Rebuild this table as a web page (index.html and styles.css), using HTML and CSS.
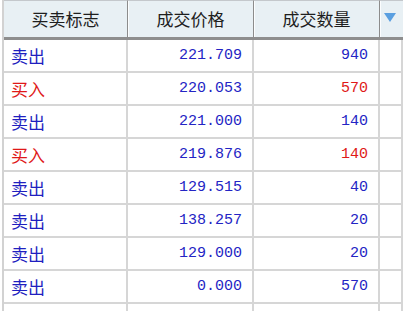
FILE: index.html
```html
<!DOCTYPE html>
<html lang="zh">
<head>
<meta charset="utf-8">
<link rel="stylesheet" href="styles.css">
</head>
<body>
<div class="grid">
  <div class="hd">买卖标志</div>
  <div class="hd">成交价格</div>
  <div class="hd">成交数量</div>
  <div class="hd hd-sort"><svg class="arrow" width="12" height="9" viewBox="0 0 12 9"><polygon points="0,0 12,0 6,9" fill="#5a9fe0"/></svg></div>

  <div class="c name sell">卖出</div><div class="c num">221.709</div><div class="c num">940</div><div class="c"></div>
  <div class="c name buy">买入</div><div class="c num">220.053</div><div class="c num red">570</div><div class="c"></div>
  <div class="c name sell">卖出</div><div class="c num">221.000</div><div class="c num">140</div><div class="c"></div>
  <div class="c name buy">买入</div><div class="c num">219.876</div><div class="c num red">140</div><div class="c"></div>
  <div class="c name sell">卖出</div><div class="c num">129.515</div><div class="c num">40</div><div class="c"></div>
  <div class="c name sell">卖出</div><div class="c num">138.257</div><div class="c num">20</div><div class="c"></div>
  <div class="c name sell">卖出</div><div class="c num">129.000</div><div class="c num">20</div><div class="c"></div>
  <div class="c name sell">卖出</div><div class="c num">0.000</div><div class="c num">570</div><div class="c"></div>
  <div class="c last"></div><div class="c last"></div><div class="c last"></div><div class="c last"></div>
</div>
</body>
</html>
```
FILE: styles.css
```css
html, body {
  margin: 0;
  padding: 0;
  background: #ffffff;
  overflow: hidden;
}
body {
  width: 403px;
  height: 311px;
}
.grid {
  display: grid;
  grid-template-columns: 124px 126px 126px 1fr;
  grid-template-rows: 40px repeat(8, 33px) 7px;
  margin-left: 2px;
  border-left: 2px solid #d2d2d2;
  font-family: "Noto Sans CJK SC", "Noto Sans", sans-serif;
}
.hd {
  background: #e8f0f4;
  border-top: 1px solid #c4c8cc;
  border-bottom: 3px solid #8e8e8e;
  border-right: 1px solid #8c8c8c;
  box-shadow: inset 1px 0 #fbfdfe;
  display: flex;
  align-items: center;
  justify-content: center;
  font-size: 17px;
  color: #1e1e1e;
  padding-bottom: 1px;
}
.hd:first-child {
  box-shadow: none;
}
.hd-sort {
  justify-content: flex-start;
  padding-left: 4px;
  border-right: none;
}
.arrow {
  display: block;
  margin-top: -3px;
}
.c {
  border-right: 2px solid #d6d6d6;
  border-bottom: 2px solid #d6d6d6;
  display: flex;
  align-items: center;
}
.c.last {
  border-bottom: none;
}
.name {
  font-size: 17px;
  padding-left: 7px;
}
.sell {
  color: #1f1fc0;
}
.buy {
  color: #e01818;
}
.num {
  justify-content: flex-end;
  padding-right: 10px;
  font-family: "Liberation Mono", monospace;
  font-size: 15px;
  color: #2424c4;
}
.num.red {
  color: #e01818;
}
```
